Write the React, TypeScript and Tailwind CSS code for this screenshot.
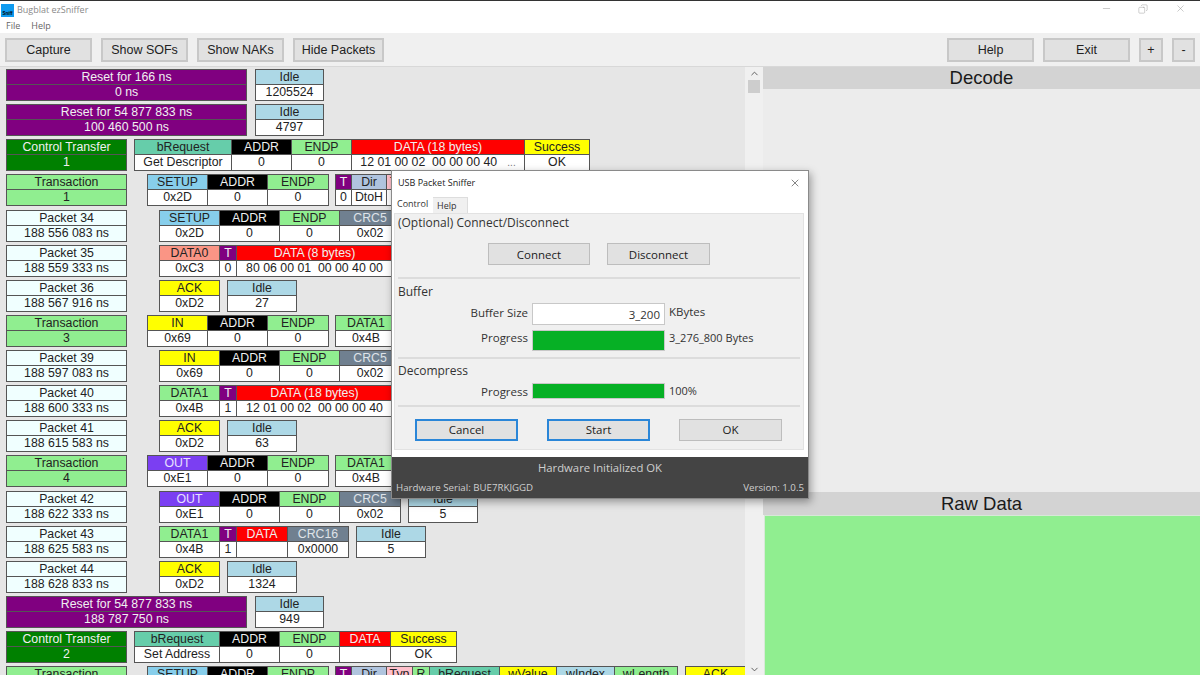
import React from "react";
import { X, Minus, Copy, ChevronUp, ChevronDown } from "lucide-react";

type C = { h: string; v?: React.ReactNode; w: number; bg: string; fg?: string };

const BLUE = "bg-[#87ceeb]";
const IDLE = "bg-[#add8e6]";
const GREEN = "bg-[#90ee90]";
const TEAL = "bg-[#66cdaa]";
const RED = "bg-[#ff0000]";
const YEL = "bg-[#ffff00]";
const BLK = "bg-[#000000]";
const PUR = "bg-[#800080]";
const SLATE = "bg-[#708090]";
const SALMON = "bg-[#fa9585]";
const VIOLET = "bg-[#7b3ff2]";
const STEEL = "bg-[#b0c4de]";
const PINK = "bg-[#ffc0cb]";

const LW = "text-[#f0f0f0]";

function Cell({ h, v = "", w, bg, fg = "text-[#222]" }: C) {
  return (
    <div className="flex flex-col shrink-0 border-r border-[#555] last:border-r-0" style={{ width: w }}>
      <div className={`h-[15px] leading-[15px] text-center whitespace-nowrap overflow-hidden border-b border-[#555] ${bg} ${fg}`}>{h}</div>
      <div className="h-[15px] leading-[15px] text-center whitespace-pre bg-white text-[#222] overflow-hidden">{v}</div>
    </div>
  );
}

function Block({ cells, ml = 0 }: { cells: C[]; ml?: number }) {
  return (
    <div className="flex shrink-0 border border-[#555] h-[32px]" style={{ marginLeft: ml }}>
      {cells.map((c, i) => (
        <Cell key={i} {...c} />
      ))}
    </div>
  );
}

function Head({ a, b, w, top, bot, fg = "text-[#222]" }: { a: string; b: string; w: number; top: string; bot: string; fg?: string }) {
  return (
    <div className="flex flex-col shrink-0 border border-[#555] h-[32px]" style={{ width: w }}>
      <div className={`h-[15px] leading-[15px] text-center border-b border-[#555] whitespace-pre ${top} ${fg}`}>{a}</div>
      <div className={`h-[15px] leading-[15px] text-center whitespace-pre ${bot} ${fg}`}>{b}</div>
    </div>
  );
}

const Reset = ({ a, b, idle }: { a: string; b: string; idle: string }) => (
  <div className="flex h-[32px]">
    <Head a={a} b={b} w={241} top={PUR} bot={PUR} fg={LW} />
    <Block ml={8} cells={[{ h: "Idle", v: idle, w: 67, bg: IDLE }]} />
  </div>
);
const Ctl = ({ n, children }: { n: string; children: React.ReactNode }) => (
  <div className="flex h-[32px]">
    <Head a="Control Transfer" b={n} w={121} top="bg-[#008000]" bot="bg-[#008000]" fg={LW} />
    {children}
  </div>
);
const Tx = ({ n, children }: { n: string; children: React.ReactNode }) => (
  <div className="flex h-[32px]">
    <Head a="Transaction" b={n} w={121} top={GREEN} bot={GREEN} />
    {children}
  </div>
);
const Pk = ({ n, t, children }: { n: string; t: string; children: React.ReactNode }) => (
  <div className="flex h-[32px]">
    <Head a={`Packet ${n}`} b={t} w={121} top="bg-[#f0ffff]" bot="bg-[#f0ffff]" />
    {children}
  </div>
);

const A: C = { h: "ADDR", v: "0", w: 60, bg: BLK, fg: LW };
const E: C = { h: "ENDP", v: "0", w: 60, bg: GREEN };
const CRC: C = { h: "CRC5", v: "0x02", w: 60, bg: SLATE, fg: "text-[#dfe3e8]" };
const I = (v: string): C => ({ h: "Idle", v, w: 68, bg: IDLE });
const ACK: C = { h: "ACK", v: "0xD2", w: 59, bg: YEL };
const D1: C = { h: "DATA1", v: "0x4B", w: 60, bg: GREEN };

function Btn({ children, w }: { children: React.ReactNode; w: string }) {
  return (
    <button className={`h-[24px] ${w} bg-[#e1e1e1] border-2 border-[#c8c8c8] text-[12.5px] leading-none text-[#222] shrink-0`}>
      {children}
    </button>
  );
}

function DBtn({ children, focus = false, w = "w-[103px]", ml = "", pt = "" }: { children: React.ReactNode; focus?: boolean; w?: string; ml?: string; pt?: string }) {
  return (
    <button
      className={`h-[22px] ${w} ${ml} ${pt} bg-[#e1e1e1] text-[11.5px] leading-none text-[#222] shrink-0 ${
        focus ? "border-2 border-[#2a86d8]" : "border border-[#bdbdbd]"
      }`}
    >
      {children}
    </button>
  );
}

function Dialog() {
  return (
    <div className="absolute left-[391px] top-[170px] w-[418px] h-[329px] bg-white border border-[#8a8a8a] shadow-[2px_3px_8px_rgba(0,0,0,0.35)] flex flex-col text-[#333] font-['Open_Sans','Noto_Sans',sans-serif]">
      <div className="h-[24px] flex items-center pl-[6px] pr-[7px] shrink-0">
        <span className="text-[9px] text-[#222]">USB Packet Sniffer</span>
        <X className="ml-auto w-[12px] h-[12px] text-[#333]" strokeWidth={1.2} />
      </div>
      <div className="flex h-[18px] pl-0 shrink-0 text-[9px]">
        <div className="w-[41px] bg-white pl-[5px] pt-[1px] leading-[16px] text-[#333]">Control</div>
        <div className="w-[35px] bg-[#f0f0f0] border-t border-r border-[#ddd] mt-[2px] pl-[4px] leading-[16px]">Help</div>
      </div>
      <div className="ml-[2px] w-[410px] h-[237px] bg-[#f0f0f0] border border-[#e2e2e2] flex flex-col px-[3px] shrink-0">
        <div className="text-[12px] leading-[16px] mt-[1px]">(Optional) Connect/Disconnect</div>
        <div className="flex mt-[12px] pl-[90px]">
          <DBtn w="w-[102px]" pt="pt-[1px]">Connect</DBtn>
          <DBtn ml="ml-[17px]" pt="pt-[1px]">Disconnect</DBtn>
        </div>
        <div className="h-[2px] bg-[#dcdcdc] mt-[12px]" />
        <div className="text-[12px] leading-[16px] mt-[5px]">Buffer</div>
        <div className="flex items-center h-[22px] mt-[3px]">
          <span className="w-[130px] text-right text-[11.5px] -mt-[3px]">Buffer Size</span>
          <div className="ml-[4px] w-[133px] h-[22px] bg-white border border-[#c8c8c8] text-right pr-[4px] text-[11.5px] leading-[22px]">3_200</div>
          <span className="ml-[4px] text-[11.5px] -mt-[4px]">KBytes</span>
        </div>
        <div className="flex items-center h-[21px] mt-[5px]">
          <span className="w-[130px] text-right text-[11.5px] -mt-[5px]">Progress</span>
          <div className="ml-[4px] w-[133px] h-[21px] bg-[#06b025] border border-[#c8c8c8]" />
          <span className="ml-[4px] text-[11px] -mt-[4px]">3_276_800 Bytes</span>
        </div>
        <div className="h-[2px] bg-[#dcdcdc] mt-[6px]" />
        <div className="text-[12px] leading-[16px] mt-[4px]">Decompress</div>
        <div className="flex items-center h-[16px] mt-[4px]">
          <span className="w-[130px] text-right text-[11.5px] mt-[1px]">Progress</span>
          <div className="ml-[4px] w-[133px] h-[16px] bg-[#06b025] border border-[#c8c8c8]" />
          <span className="ml-[4px] text-[11px] mt-[1px]">100%</span>
        </div>
        <div className="h-[2px] bg-[#dcdcdc] mt-[6px]" />
        <div className="flex pl-[17px] mt-[12px] gap-[29px]">
          <DBtn focus>Cancel</DBtn>
          <DBtn focus>Start</DBtn>
          <DBtn>OK</DBtn>
        </div>
      </div>
      <div className="flex-1 bg-white" />
      <div className="h-[41px] bg-[#444444] text-[#cfcfcf] shrink-0">
        <div className="text-center text-[11.3px] leading-[16px] pt-[3px]">Hardware Initialized OK</div>
        <div className="flex justify-between px-[4px] text-[9.7px] leading-[14px] mt-[5px]">
          <span>Hardware Serial: BUE7RKJGGD</span>
          <span>Version: 1.0.5</span>
        </div>
      </div>
    </div>
  );
}

export default function App() {
  return (
    <div className="relative w-[1200px] h-[675px] overflow-hidden bg-[#f0f0f0] font-['Liberation_Sans',Arial,sans-serif] flex flex-col">
      <div className="h-[1px] bg-[#333] shrink-0" />
      <div className="h-[18px] bg-white flex items-center shrink-0">
        <div className="ml-[1px] w-[13px] h-[13px] bg-[#0f9bf0] flex items-end justify-center overflow-hidden">
          <span className="text-[4.5px] leading-[6px] font-bold text-black">Sniff</span>
        </div>
        <span className="ml-[3px] text-[9px] text-[#8a8a8a] font-['Open_Sans',sans-serif]">Bugblat ezSniffer</span>
        <div className="ml-auto flex items-center text-[#8c8c8c] -mt-[3px]">
          <Minus className="w-[11px] h-[11px]" strokeWidth={1} />
          <Copy className="w-[10px] h-[10px] ml-[26px] -scale-x-100" strokeWidth={1} />
          <X className="w-[11px] h-[11px] ml-[27px] mr-[14px]" strokeWidth={1} />
        </div>
      </div>
      <div className="h-[14px] bg-white flex items-center pl-[6px] gap-[11px] text-[9px] text-[#666] font-['Open_Sans',sans-serif] shrink-0">
        <span>File</span>
        <span>Help</span>
      </div>
      <div className="h-[33px] flex items-start pt-[5px] pl-[5px] pr-[5px] gap-[9px] shrink-0">
        <Btn w="w-[87px]">Capture</Btn>
        <Btn w="w-[87px]">Show SOFs</Btn>
        <Btn w="w-[87px]">Show NAKs</Btn>
        <Btn w="w-[91px]">Hide Packets</Btn>
        <div className="ml-auto flex items-center gap-[9px]">
          <Btn w="w-[87px]">Help</Btn>
          <Btn w="w-[87px]">Exit</Btn>
          <Btn w="w-[24px]">+</Btn>
          <Btn w="w-[23px]">-</Btn>
        </div>
      </div>
      <div className="h-[1px] bg-[#d8d8d8] shrink-0" />
      <div className="flex flex-1 min-h-0">
        <div className="w-[745px] h-full overflow-hidden bg-[#e6e6e6] flex flex-col gap-[3.13px] pl-[6px] pt-[2px] text-[12.3px] shrink-0">
          <Reset a="Reset for 166 ns" b="0 ns" idle="1205524" />
          <Reset a="Reset for 54 877 833 ns" b="100 460 500 ns" idle="4797" />
          <Ctl n="1">
            <Block ml={7} cells={[
              { h: "bRequest", v: "Get Descriptor", w: 97, bg: TEAL },
              A, E,
              { h: "DATA (18 bytes)", v: <>12 01 00 02  00 00 00 40   <span className="text-[10px] text-[#777]">...</span></>, w: 173, bg: RED, fg: LW },
              { h: "Success", v: "OK", w: 64, bg: YEL },
            ]} />
          </Ctl>
          <Tx n="1">
            <Block ml={20} cells={[{ h: "SETUP", v: "0x2D", w: 60, bg: BLUE }, A, E]} />
            <Block ml={6} cells={[
              { h: "T", v: "0", w: 16, bg: PUR, fg: LW },
              { h: "Dir", v: "DtoH", w: 35, bg: STEEL },
              { h: "Typ", v: "Std", w: 26, bg: PINK },
            ]} />
          </Tx>
          <Pk n="34" t="188 556 083 ns">
            <Block ml={32} cells={[{ h: "SETUP", v: "0x2D", w: 60, bg: BLUE }, A, E, CRC]} />
          </Pk>
          <Pk n="35" t="188 559 333 ns">
            <Block ml={32} cells={[
              { h: "DATA0", v: "0xC3", w: 60, bg: SALMON },
              { h: "T", v: "0", w: 17, bg: PUR, fg: LW },
              { h: "DATA (8 bytes)", v: "80 06 00 01  00 00 40 00", w: 155, bg: RED, fg: LW },
            ]} />
          </Pk>
          <Pk n="36" t="188 567 916 ns">
            <Block ml={32} cells={[ACK]} />
            <Block ml={7} cells={[I("27")]} />
          </Pk>
          <Tx n="3">
            <Block ml={20} cells={[{ h: "IN", v: "0x69", w: 60, bg: YEL }, A, E]} />
            <Block ml={6} cells={[D1]} />
          </Tx>
          <Pk n="39" t="188 597 083 ns">
            <Block ml={32} cells={[{ h: "IN", v: "0x69", w: 60, bg: YEL }, A, E, CRC]} />
          </Pk>
          <Pk n="40" t="188 600 333 ns">
            <Block ml={32} cells={[
              D1,
              { h: "T", v: "1", w: 17, bg: PUR, fg: LW },
              { h: "DATA (18 bytes)", v: "12 01 00 02  00 00 00 40", w: 155, bg: RED, fg: LW },
            ]} />
          </Pk>
          <Pk n="41" t="188 615 583 ns">
            <Block ml={32} cells={[ACK]} />
            <Block ml={7} cells={[I("63")]} />
          </Pk>
          <Tx n="4">
            <Block ml={20} cells={[{ h: "OUT", v: "0xE1", w: 60, bg: VIOLET, fg: "text-[#e8e0ff]" }, A, E]} />
            <Block ml={6} cells={[D1]} />
          </Tx>
          <Pk n="42" t="188 622 333 ns">
            <Block ml={32} cells={[{ h: "OUT", v: "0xE1", w: 60, bg: VIOLET, fg: "text-[#e8e0ff]" }, A, E, CRC]} />
            <Block ml={7} cells={[I("5")]} />
          </Pk>
          <Pk n="43" t="188 625 583 ns">
            <Block ml={32} cells={[
              D1,
              { h: "T", v: "1", w: 17, bg: PUR, fg: LW },
              { h: "DATA", v: "", w: 51, bg: RED, fg: LW },
              { h: "CRC16", v: "0x0000", w: 60, bg: SLATE, fg: "text-[#dfe3e8]" },
            ]} />
            <Block ml={7} cells={[I("5")]} />
          </Pk>
          <Pk n="44" t="188 628 833 ns">
            <Block ml={32} cells={[ACK]} />
            <Block ml={7} cells={[I("1324")]} />
          </Pk>
          <Reset a="Reset for 54 877 833 ns" b="188 787 750 ns" idle="949" />
          <Ctl n="2">
            <Block ml={7} cells={[
              { h: "bRequest", v: "Set Address", w: 85, bg: TEAL },
              A, E,
              { h: "DATA", v: "", w: 51, bg: RED, fg: LW },
              { h: "Success", v: "OK", w: 65, bg: YEL },
            ]} />
          </Ctl>
          <Tx n="2">
            <Block ml={20} cells={[{ h: "SETUP", v: "0x2D", w: 60, bg: BLUE }, A, E]} />
            <Block ml={6} cells={[
              { h: "T", v: "0", w: 16, bg: PUR, fg: LW },
              { h: "Dir", v: "HtoD", w: 35, bg: STEEL },
              { h: "Typ", v: "Std", w: 26, bg: PINK },
              { h: "R", v: "D", w: 17, bg: GREEN },
              { h: "bRequest", v: "5", w: 70, bg: TEAL },
              { h: "wValue", v: "0x0001", w: 57, bg: YEL },
              { h: "wIndex", v: "0", w: 58, bg: IDLE },
              { h: "wLength", v: "0", w: 62, bg: GREEN },
            ]} />
            <Block ml={7} cells={[ACK]} />
          </Tx>
        </div>
        <div className="w-[18px] h-full bg-[#f0f0f0] flex flex-col items-center shrink-0 relative">
          <ChevronUp className="w-[11px] h-[11px] mt-[1px] text-[#555]" strokeWidth={2} />
          <div className="w-[12px] h-[13px] bg-[#cdcdcd] mt-[1px]" />
          <ChevronDown className="absolute bottom-0 w-[11px] h-[11px] text-[#555]" strokeWidth={2} />
        </div>
        <div className="flex-1 flex flex-col h-full min-w-0">
          <div className="h-[22px] bg-[#d3d3d3] text-center text-[18.5px] leading-[22px] text-[#1a1a1a]">Decode</div>
          <div className="h-[403px] bg-[#ececec]" />
          <div className="h-[23px] bg-[#d3d3d3] text-center text-[18.5px] leading-[23px] text-[#1a1a1a]">Raw Data</div>
          <div className="flex-1 bg-[#90ee90] border-t border-l border-[#d8e8d8] ml-[1px]" />
        </div>
      </div>
      <Dialog />
    </div>
  );
}
